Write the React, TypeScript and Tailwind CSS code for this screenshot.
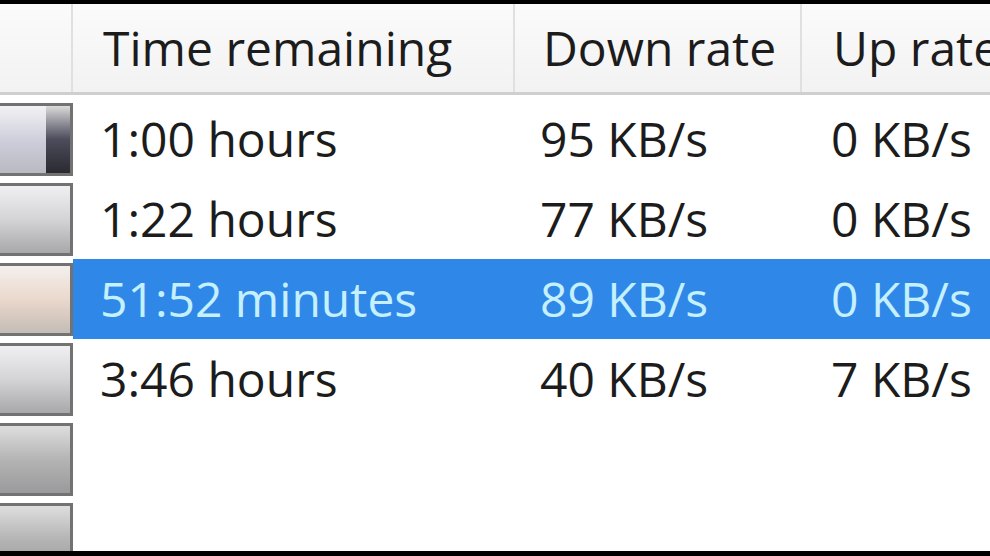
const cols = 'grid grid-cols-[73px_442px_287px_1fr]'

type Row = { time: string; down: string; up: string; selected?: boolean; bar: string }

const rows: Row[] = [
  { time: '1:00 hours', down: '95 KB/s', up: '0 KB/s', bar: 'first' },
  { time: '1:22 hours', down: '77 KB/s', up: '0 KB/s', bar: 'plain' },
  { time: '51:52 minutes', down: '89 KB/s', up: '0 KB/s', selected: true, bar: 'warm' },
  { time: '3:46 hours', down: '40 KB/s', up: '7 KB/s', bar: 'plain' },
  { time: '', down: '', up: '', bar: 'dark' },
  { time: '', down: '', up: '', bar: 'dark' },
]

function Bar({ kind }: { kind: string }) {
  if (kind === 'first') {
    return (
      <div className="flex h-full w-full border-[3px] border-l-0 border-[#727272] bg-gradient-to-b from-[#f2f2f4] via-[#cfcfdc] to-[#b9b9c2]">
        <div className="flex-1" />
        <div className="w-[24px] bg-gradient-to-b from-[#dcdcdc] via-[#4c4c5c] to-[#2a2a30]" />
      </div>
    )
  }
  const grad =
    kind === 'warm'
      ? 'from-[#f4f0ee] via-[#ead8cc] to-[#c4bcb6]'
      : kind === 'dark'
        ? 'from-[#dedede] via-[#b4b4b4] to-[#9a9a9c]'
        : 'from-[#f0f0f2] via-[#d4d4d6] to-[#a8a8aa]'
  return <div className={`h-full w-full border-[3px] border-l-0 border-[#727272] bg-gradient-to-b ${grad}`} />
}

export default function App() {
  return (
    <div className="h-[556px] w-[990px] overflow-hidden bg-black pb-[5px] pt-[4px] font-['Open_Sans',sans-serif]">
      <div className="flex h-full flex-col overflow-hidden bg-white">
        <div className={`${cols} h-[91px] shrink-0 border-b-[3px] border-[#cfcfcf] bg-gradient-to-b from-[#fbfbfb] to-[#f2f2f2] text-[48px] text-[#1c1c1c]`}>
          <div className="border-r-2 border-[#e0e0e0]" />
          <div className="flex items-center border-r-2 border-[#e0e0e0] pl-[30px]">Time remaining</div>
          <div className="flex items-center border-r-2 border-[#e0e0e0] pl-[28px]">Down rate</div>
          <div className="flex items-center pl-[31px] whitespace-nowrap">Up rate</div>
        </div>
        <div className="mt-[4px] flex shrink-0 flex-col">
          {rows.map((r, i) => (
            <div key={i} className={`${cols} h-[80px] text-[48px] ${r.selected ? 'text-[#c4f0ff]' : 'text-[#1c1c1c]'}`}>
              <div className="py-[4px] pb-[3px]">
                <Bar kind={r.bar} />
              </div>
              <div className={`flex items-center pl-[27px] ${r.selected ? 'bg-[#2f88e8]' : ''}`}>{r.time}</div>
              <div className={`flex items-center pl-[25px] ${r.selected ? 'bg-[#2f88e8]' : ''}`}>{r.down}</div>
              <div className={`flex items-center whitespace-nowrap pl-[29px] ${r.selected ? 'bg-[#2f88e8]' : ''}`}>{r.up}</div>
            </div>
          ))}
        </div>
      </div>
    </div>
  )
}
